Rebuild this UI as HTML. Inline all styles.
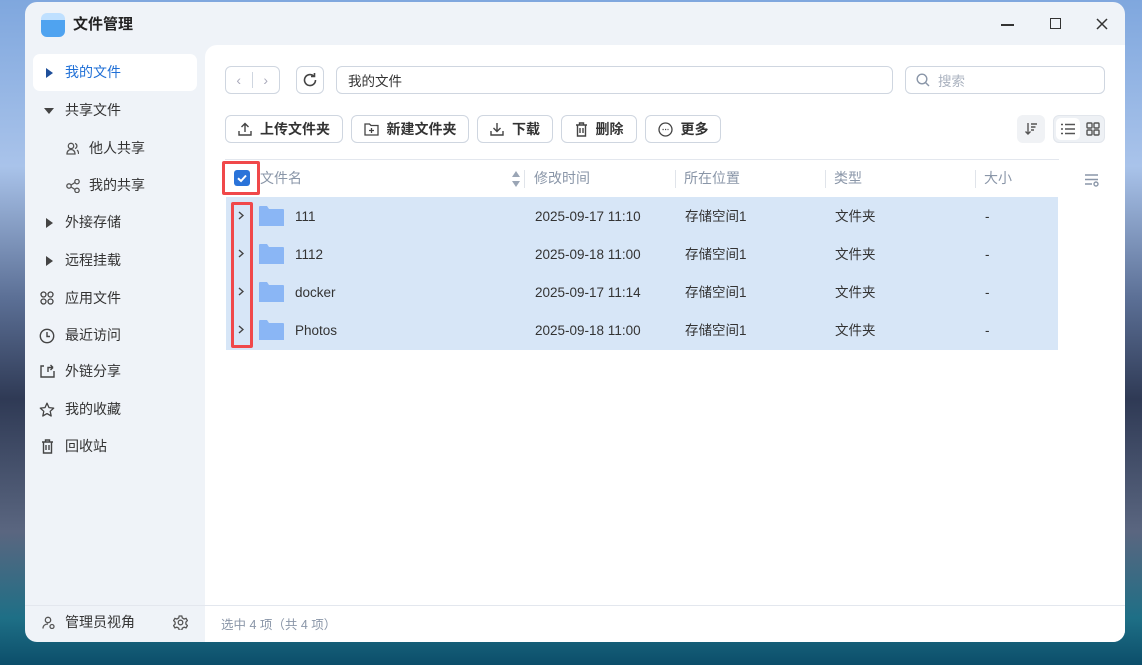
<!DOCTYPE html>
<html><head><meta charset="utf-8"><style>
*{margin:0;padding:0;box-sizing:border-box}
body{width:1142px;height:665px;overflow:hidden;position:relative;font-family:"Liberation Sans","Noto Sans CJK SC",sans-serif;font-size:14px;color:#333;
background:linear-gradient(180deg,#7fa7de 0%,#a9c3ea 25%,#5b6f95 45%,#2f3a55 60%,#5a6680 80%,#1e6f86 93%,#0c4e6a 100%)}
.abs{position:absolute}
svg{display:block}
.win{position:absolute;left:25px;top:2px;width:1100px;height:640px;background:#eff3f8;border-radius:12px;overflow:hidden}
.main{position:absolute;left:180px;top:43px;width:920px;height:560px;background:#fff;border-top-left-radius:12px}
.foot{position:absolute;left:0;top:603px;width:1100px;height:37px;border-top:1px solid #e3e7ee}
.footr{position:absolute;left:180px;top:604px;width:920px;height:36px;background:#fff}
.nav{position:absolute;left:8px;width:164px;height:36px;font-size:14px;color:#333;line-height:36px}
.nav .t{position:absolute;left:32px;top:0}
.nav .i{position:absolute;top:11px}
.btn{position:absolute;height:28px;border:1px solid #cfd6e0;border-radius:6px;display:flex;align-items:center;justify-content:center;font-weight:bold;font-size:14px;color:#333;background:#fff}
.btn svg{margin-right:8px}
.hd{position:absolute;top:166px;color:#8a96a8;font-size:14px;line-height:20px}
.sep{position:absolute;top:168px;width:1px;height:18px;background:#e0e4ea}
.row{position:absolute;left:201px;width:832px;height:38px;background:#d7e6f7}
.c{position:absolute;top:1px;line-height:38px;font-size:13.5px;color:#333}
.fold{position:absolute;left:33px;top:8px}
.chev{position:absolute;left:12px;top:14px}
</style></head><body>
<div class="win">
 <div class="abs" style="left:16px;top:11px;width:24px;height:24px;border-radius:6px;background:linear-gradient(#bfe0ff 0 30%,#4fa3f0 30%)"></div>
 <div class="abs" style="left:48px;top:11px;font-size:15px;font-weight:bold;color:#222">文件管理</div>
 <div class="abs" style="left:976px;top:22px;width:13px;height:1.5px;background:#333"></div>
 <div class="abs" style="left:1025px;top:16px;width:11px;height:11px;border:1.5px solid #333"></div>
 <svg class="abs" style="left:1071px;top:16px" width="12" height="12"><path d="M1 1L11 11M11 1L1 11" stroke="#333" stroke-width="1.5"/></svg>

 <div class="abs" style="left:8px;top:52px;width:164px;height:37px;background:#fff;border-radius:7px"></div>
 <div class="nav" style="top:52px;color:#1f6fd6"><svg class="i" style="left:13px;top:14px" width="7" height="10"><path d="M0 0L7 5L0 10z" fill="#1f4f9a"/></svg><span class="t">我的文件</span></div>
 <div class="nav" style="top:90px"><svg class="i" style="left:11px;top:16px" width="10" height="6"><path d="M0 0H10L5 6z" fill="#444"/></svg><span class="t">共享文件</span></div>
 <div class="nav" style="top:128px"><svg class="i" style="left:33px;top:12px" width="13" height="13"><circle cx="5" cy="4" r="2.7" fill="none" stroke="#555" stroke-width="1.3"/><path d="M1 12c0-3 2-4.5 4-4.5s4 1.5 4 4.5z M9 1.5a2.6 2.6 0 0 1 0 5 M11 8c1 .7 1.6 2 1.6 4" fill="none" stroke="#555" stroke-width="1.3"/></svg><span class="t" style="left:56px">他人共享</span></div>
 <div class="nav" style="top:165px"><svg class="i" style="left:33px;top:12px" width="14" height="14"><circle cx="3" cy="7" r="2.2" fill="none" stroke="#555" stroke-width="1.3"/><circle cx="11" cy="2.6" r="2.2" fill="none" stroke="#555" stroke-width="1.3"/><circle cx="11" cy="11.4" r="2.2" fill="none" stroke="#555" stroke-width="1.3"/><path d="M5 6L9 3.6M5 8L9 10.4" stroke="#555" stroke-width="1.3"/></svg><span class="t" style="left:56px">我的共享</span></div>
 <div class="nav" style="top:202px"><svg class="i" style="left:13px;top:14px" width="7" height="10"><path d="M0 0L7 5L0 10z" fill="#444"/></svg><span class="t">外接存储</span></div>
 <div class="nav" style="top:240px"><svg class="i" style="left:13px;top:14px" width="7" height="10"><path d="M0 0L7 5L0 10z" fill="#444"/></svg><span class="t">远程挂载</span></div>
 <div class="nav" style="top:278px"><svg class="i" style="left:7px" width="14" height="14" fill="none" stroke="#444" stroke-width="1.3"><circle cx="3.5" cy="3.5" r="2.5"/><circle cx="10.5" cy="3.5" r="2.5"/><circle cx="3.5" cy="10.5" r="2.5"/><circle cx="10.5" cy="10.5" r="2.5"/></svg><span class="t">应用文件</span></div>
 <div class="nav" style="top:315px"><svg class="i" style="left:6px" width="16" height="16" fill="none" stroke="#444" stroke-width="1.4"><circle cx="8" cy="8" r="6.7"/><path d="M8 4v4.5h3"/></svg><span class="t">最近访问</span></div>
 <div class="nav" style="top:351px"><svg class="i" style="left:7px" width="15" height="14" fill="none" stroke="#444" stroke-width="1.4"><path d="M4 2H1v11h13V7M8 8V3.5h5M13 3.5L10.5 1M13 3.5L10.5 6"/></svg><span class="t">外链分享</span></div>
 <div class="nav" style="top:389px"><svg class="i" style="left:6px" width="16" height="16"><path d="M8 1.2l2 4.4 4.7.5-3.5 3.2 1 4.7L8 11.6 3.8 14l1-4.7L1.3 6.1 6 5.6z" fill="none" stroke="#444" stroke-width="1.3" stroke-linejoin="round"/></svg><span class="t">我的收藏</span></div>
 <div class="nav" style="top:426px"><svg class="i" style="left:8px" width="13" height="15" fill="none" stroke="#444" stroke-width="1.4"><path d="M1 3h11M4.5 3V1h4v2M2.5 3v11h8V3M5 6v5M8 6v5"/></svg><span class="t">回收站</span></div>

 <div class="main">
  <div class="btn" style="left:20px;top:21px;width:55px;height:28px;font-weight:normal;color:#aab"><span style="width:27px;text-align:center;border-right:1px solid #cfd6e0">‹</span><span style="width:27px;text-align:center">›</span></div>
  <div class="btn" style="left:91px;top:21px;width:28px"><svg style="margin:0" width="16" height="16" fill="none" stroke="#444" stroke-width="1.6"><path d="M13.5 8A5.5 5.5 0 1 1 11.5 3.8M12.5 1v3.5H9"/></svg></div>
  <div class="btn" style="left:131px;top:21px;width:557px;justify-content:flex-start;padding-left:11px;font-weight:normal;font-size:13.5px">我的文件</div>
  <div class="btn" style="left:700px;top:21px;width:200px;justify-content:flex-start;padding-left:10px;font-weight:normal;color:#aab2bf;font-size:13.5px"><svg width="14" height="14" fill="none" stroke="#8a96a8" stroke-width="1.4"><circle cx="6" cy="6" r="4.8"/><path d="M9.5 9.5L13 13"/></svg>搜索</div>
  <div class="btn" style="left:20px;top:70px;width:118px"><svg width="14" height="14" fill="none" stroke="#444" stroke-width="1.4"><path d="M7 10V2M3.5 5L7 1.5 10.5 5M1 9v4h12V9"/></svg>上传文件夹</div>
  <div class="btn" style="left:146px;top:70px;width:118px"><svg width="15" height="13" fill="none" stroke="#444" stroke-width="1.3"><path d="M1 1h4.5l1.5 1.5h7V12H1z M7.5 5v5M5 7.5h5"/></svg>新建文件夹</div>
  <div class="btn" style="left:272px;top:70px;width:76px"><svg width="14" height="14" fill="none" stroke="#444" stroke-width="1.4"><path d="M7 1v8M3.5 6L7 9.5 10.5 6M1 9v4h12V9"/></svg>下载</div>
  <div class="btn" style="left:356px;top:70px;width:76px"><svg width="13" height="15" fill="none" stroke="#444" stroke-width="1.4"><path d="M1 3h11M4.5 3V1h4v2M2.5 3v11h8V3M5 6v5M8 6v5"/></svg>删除</div>
  <div class="btn" style="left:440px;top:70px;width:76px"><svg width="15" height="15" fill="none" stroke="#444" stroke-width="1.3"><circle cx="7.5" cy="7.5" r="6.5"/><path d="M4.5 7.5h6" stroke-dasharray="1.2 1.3"/></svg>更多</div>
  <div class="abs" style="left:812px;top:70px;width:28px;height:28px;background:#f0f2f5;border-radius:6px"><svg style="margin:7px" width="14" height="14" fill="none" stroke="#555" stroke-width="1.4"><path d="M4 1v11M1.5 9.5L4 12 6.5 9.5M7 2h6M7 5h4.5M7 8h3"/></svg></div>
  <div class="abs" style="left:848px;top:70px;width:52px;height:28px;background:#eef1f5;border:1px solid #e2e6ec;border-radius:6px"></div>
  <div class="abs" style="left:851px;top:73px;width:24px;height:22px;background:#fff;border-radius:5px"><svg style="margin:5px 5px" width="14" height="12" fill="none" stroke="#555" stroke-width="1.4"><path d="M0 1.5h2M4 1.5h10M0 6h2M4 6h10M0 10.5h2M4 10.5h10"/></svg></div>
  <div class="abs" style="left:876px;top:73px;width:24px;height:22px"><svg style="margin:4px 5px" width="14" height="14" fill="none" stroke="#555" stroke-width="1.4"><rect x="1" y="1" width="5" height="5" rx="1"/><rect x="8" y="1" width="5" height="5" rx="1"/><rect x="1" y="8" width="5" height="5" rx="1"/><rect x="8" y="8" width="5" height="5" rx="1"/></svg></div>
  <div class="abs" style="left:20px;top:114px;width:834px;height:1px;background:#e3e7ee"></div>
  <svg class="abs" style="left:879px;top:128px" width="16" height="14" fill="none" stroke="#8a96a8" stroke-width="1.4"><path d="M1 2h13M1 6.5h13M1 11h7"/><circle cx="12" cy="11" r="2"/></svg>
 </div>

 <div class="abs" style="left:197px;top:159px;width:38px;height:34px;border:3px solid #f0484a;border-radius:2px"></div>
 <div class="abs" style="left:209px;top:168px;width:16px;height:16px;background:#2a73d9;border-radius:3px"><svg width="16" height="16"><path d="M4 8.3L7 11 12 5.5" fill="none" stroke="#fff" stroke-width="2"/></svg></div>
 <div class="hd" style="left:235px">文件名</div>
 <svg class="abs" style="left:487px;top:169px" width="8" height="16"><path d="M4 0L8 6H0zM4 16L8 10H0z" fill="#9aa5b5"/></svg>
 <div class="sep" style="left:499px"></div><div class="hd" style="left:509px">修改时间</div>
 <div class="sep" style="left:650px"></div><div class="hd" style="left:659px">所在位置</div>
 <div class="sep" style="left:800px"></div><div class="hd" style="left:809px">类型</div>
 <div class="sep" style="left:950px"></div><div class="hd" style="left:959px">大小</div>

 <div class="row" style="top:195px"><svg class="chev" width="6" height="9"><path d="M1 1L5 4.5 1 8" fill="none" stroke="#444" stroke-width="1.4"/></svg><svg class="fold" width="25" height="22"><path d="M0 2a1 1 0 0 1 1-1h7l2 3h14a1 1 0 0 1 1 1v16H0z" fill="#8ab6f5"/></svg><div class="c" style="left:69px">111</div><div class="c" style="left:309px">2025-09-17 11:10</div><div class="c" style="left:459px">存储空间1</div><div class="c" style="left:609px">文件夹</div><div class="c" style="left:759px">-</div></div>
 <div class="row" style="top:233px"><svg class="chev" width="6" height="9"><path d="M1 1L5 4.5 1 8" fill="none" stroke="#444" stroke-width="1.4"/></svg><svg class="fold" width="25" height="22"><path d="M0 2a1 1 0 0 1 1-1h7l2 3h14a1 1 0 0 1 1 1v16H0z" fill="#8ab6f5"/></svg><div class="c" style="left:69px">1112</div><div class="c" style="left:309px">2025-09-18 11:00</div><div class="c" style="left:459px">存储空间1</div><div class="c" style="left:609px">文件夹</div><div class="c" style="left:759px">-</div></div>
 <div class="row" style="top:271px"><svg class="chev" width="6" height="9"><path d="M1 1L5 4.5 1 8" fill="none" stroke="#444" stroke-width="1.4"/></svg><svg class="fold" width="25" height="22"><path d="M0 2a1 1 0 0 1 1-1h7l2 3h14a1 1 0 0 1 1 1v16H0z" fill="#8ab6f5"/></svg><div class="c" style="left:69px">docker</div><div class="c" style="left:309px">2025-09-17 11:14</div><div class="c" style="left:459px">存储空间1</div><div class="c" style="left:609px">文件夹</div><div class="c" style="left:759px">-</div></div>
 <div class="row" style="top:309px;height:39px"><svg class="chev" width="6" height="9"><path d="M1 1L5 4.5 1 8" fill="none" stroke="#444" stroke-width="1.4"/></svg><svg class="fold" width="25" height="22"><path d="M0 2a1 1 0 0 1 1-1h7l2 3h14a1 1 0 0 1 1 1v16H0z" fill="#8ab6f5"/></svg><div class="c" style="left:69px">Photos</div><div class="c" style="left:309px">2025-09-18 11:00</div><div class="c" style="left:459px">存储空间1</div><div class="c" style="left:609px">文件夹</div><div class="c" style="left:759px">-</div></div>
 <div class="abs" style="left:206px;top:200px;width:22px;height:146px;border:3px solid #f0484a;border-radius:2px"></div>

 <div class="foot"></div>
 <div class="footr"></div>
 <svg class="abs" style="left:17px;top:614px" width="13" height="13" fill="none" stroke="#555" stroke-width="1.3"><circle cx="6" cy="4" r="2.7"/><path d="M1 12.5c0-3 2.3-4.5 5-4.5"/><circle cx="10" cy="10.5" r="2"/></svg>
 <div class="abs" style="left:40px;top:610px;font-size:14px;color:#333">管理员视角</div>
 <svg class="abs" style="left:148px;top:613px" width="15" height="15" fill="none" stroke="#555" stroke-width="1.3"><circle cx="7.5" cy="7.5" r="2.3"/><path d="M6.2 1h2.6l.5 2 1.8 1 2-.6 1.3 2.2-1.5 1.5v2l1.5 1.5-1.3 2.2-2-.6-1.8 1-.5 2H6.2l-.5-2-1.8-1-2 .6L.6 10.6l1.5-1.5v-2L.6 5.6 1.9 3.4l2 .6 1.8-1z"/></svg>
 <div class="abs" style="left:196px;top:612px;font-size:12.5px;color:#8a96a8">选中 4 项（共 4 项）</div>
</div>
</body></html>
